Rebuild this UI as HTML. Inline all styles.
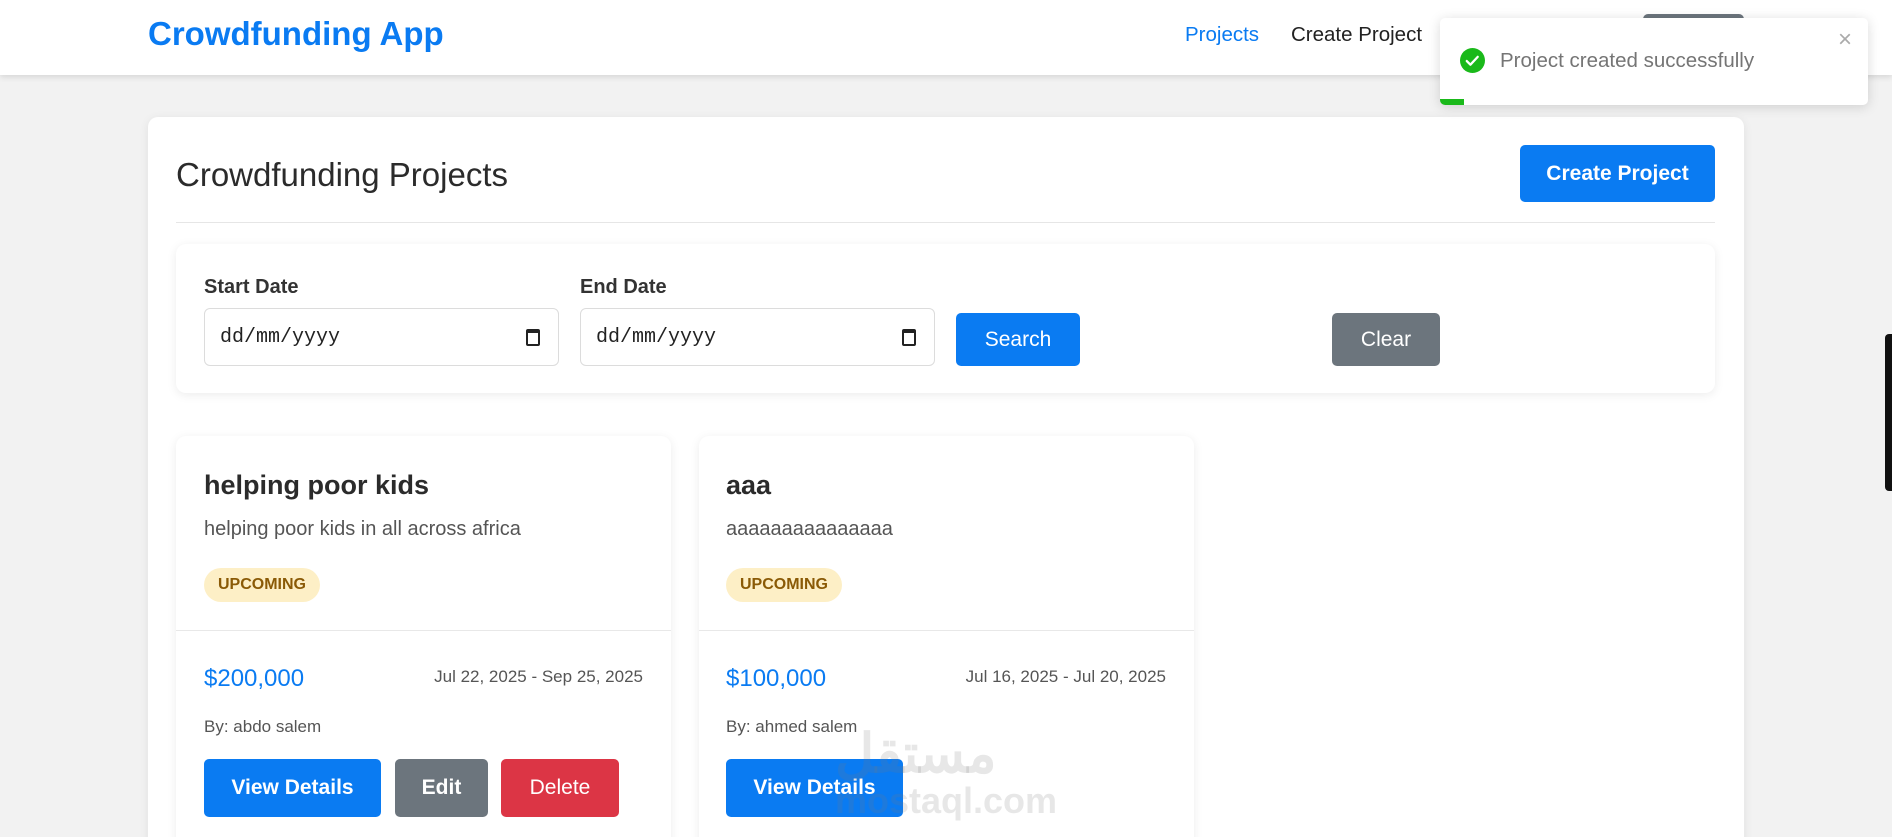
<!DOCTYPE html>
<html><head><meta charset="utf-8"><style>
*{box-sizing:border-box;margin:0;padding:0}
html,body{width:1892px;height:837px;overflow:hidden}
body{background:#f2f2f2;font-family:"Liberation Sans",sans-serif;position:relative;color:#2b2b2b}
.abs{position:absolute}
.nav{left:0;top:0;width:1892px;height:75px;background:#fff;box-shadow:0 2px 6px rgba(0,0,0,.12)}
.btn{position:absolute;color:#fff;border-radius:5px;display:flex;align-items:center;justify-content:center;font-size:21px}
.card{background:#fff;border-radius:10px;box-shadow:0 2px 10px rgba(0,0,0,.08)}
.inp{position:absolute;top:308px;height:58px;width:355px;border:1px solid #dcdcdc;border-radius:6px;background:#fff;font-family:"Liberation Mono",monospace;font-size:20px;display:flex;align-items:center;padding-left:15px;color:#222}
.cal{position:absolute;right:18px;top:20px;width:14px;height:17px;border:2px solid #222;border-top-width:4px;border-radius:2px}
.badge{position:absolute;top:132px;left:28px;height:34px;padding:0 14px;border-radius:17px;background:#fdefc6;color:#8a5a06;font-weight:bold;font-size:16px;display:flex;align-items:center}
</style></head><body>
<div class="abs nav"></div>
<div class="abs" style="left:148px;top:15px;font-size:33px;font-weight:bold;color:#0a7bf2">Crowdfunding App</div>
<div class="abs" style="left:1185px;top:23px;font-size:20.5px;color:#0a7bf2">Projects</div>
<div class="abs" style="left:1291px;top:23px;font-size:20.5px;color:#222">Create Project</div>
<div class="abs" style="left:1643px;top:14px;width:101px;height:40px;background:#6c757d;border-radius:5px"></div>

<div class="abs card" style="left:148px;top:117px;width:1596px;height:740px"></div>
<div class="abs" style="left:176px;top:156px;font-size:33px;color:#2b2b2b">Crowdfunding Projects</div>
<div class="btn" style="left:1520px;top:145px;width:195px;height:57px;background:#0a7bf2;font-weight:bold">Create Project</div>
<div class="abs" style="left:176px;top:222px;width:1539px;height:1px;background:#e6e6e6"></div>

<div class="abs card" style="left:176px;top:244px;width:1539px;height:149px"></div>
<div class="abs" style="left:204px;top:276px;font-size:20px;font-weight:bold;color:#333">Start Date</div>
<div class="abs" style="left:580px;top:276px;font-size:20px;font-weight:bold;color:#333">End Date</div>
<div class="inp" style="left:204px">dd/mm/yyyy<div class="cal"></div></div>
<div class="inp" style="left:580px">dd/mm/yyyy<div class="cal"></div></div>
<div class="btn" style="left:956px;top:313px;width:124px;height:53px;background:#0a7bf2">Search</div>
<div class="btn" style="left:1332px;top:313px;width:108px;height:53px;background:#6c757d">Clear</div>

<div class="abs card" style="left:176px;top:436px;width:495px;height:420px">
<div class="abs" style="left:28px;top:34px;font-size:27px;font-weight:bold;color:#2b2b2b">helping poor kids</div>
<div class="abs" style="left:28px;top:82px;font-size:20px;color:#555">helping poor kids in all across africa</div>
<div class="badge">UPCOMING</div>
<div class="abs" style="left:0;top:194px;width:495px;height:1px;background:#e8e8e8"></div>
<div class="abs" style="left:28px;top:229px;font-size:24px;color:#0a7bf2">$200,000</div>
<div class="abs" style="right:28px;top:231px;font-size:17px;color:#555">Jul 22, 2025 - Sep 25, 2025</div>
<div class="abs" style="left:28px;top:281px;font-size:17px;color:#555">By: abdo salem</div>
<div class="btn" style="left:28px;top:323px;width:177px;height:58px;background:#0a7bf2;font-weight:bold">View Details</div>
<div class="btn" style="left:219px;top:323px;width:93px;height:58px;background:#6c757d;font-weight:bold">Edit</div>
<div class="btn" style="left:325px;top:323px;width:118px;height:58px;background:#dc3545">Delete</div>
</div>

<div class="abs card" style="left:699px;top:436px;width:495px;height:420px">
<div class="abs" style="left:27px;top:34px;font-size:27px;font-weight:bold;color:#2b2b2b">aaa</div>
<div class="abs" style="left:27px;top:82px;font-size:20px;color:#555">aaaaaaaaaaaaaaa</div>
<div class="badge" style="left:27px">UPCOMING</div>
<div class="abs" style="left:0;top:194px;width:495px;height:1px;background:#e8e8e8"></div>
<div class="abs" style="left:27px;top:229px;font-size:24px;color:#0a7bf2">$100,000</div>
<div class="abs" style="right:28px;top:231px;font-size:17px;color:#555">Jul 16, 2025 - Jul 20, 2025</div>
<div class="abs" style="left:27px;top:281px;font-size:17px;color:#555">By: ahmed salem</div>
<div class="btn" style="left:27px;top:323px;width:177px;height:58px;background:#0a7bf2;font-weight:bold">View Details</div>
</div>

<div class="abs" style="left:835px;top:722px;font-size:54px;font-weight:bold;color:rgba(120,120,120,.18);font-family:'Liberation Sans','Noto Sans CJK SC',sans-serif">مستقل</div>
<div class="abs" style="left:835px;top:780px;font-size:36px;font-weight:bold;color:rgba(120,120,120,.18)">mostaql.com</div>

<div class="abs" style="left:1885px;top:334px;width:7px;height:157px;background:#111;border-radius:4px 0 0 4px"></div>

<div class="abs" style="left:1440px;top:18px;width:428px;height:87px;background:#fff;border-radius:5px;box-shadow:0 2px 12px rgba(0,0,0,.15);overflow:hidden">
<svg class="abs" style="left:20px;top:30px" width="25" height="25" viewBox="0 0 24 24"><circle cx="12" cy="12" r="12" fill="#1ab91a"/><path d="M6.5 12.5l3.5 3.5 7-7.5" stroke="#fff" stroke-width="2.2" fill="none" stroke-linecap="round" stroke-linejoin="round"/></svg>
<div class="abs" style="left:60px;top:31px;font-size:20.5px;color:#757575">Project created successfully</div>
<div class="abs" style="left:398px;top:8px;font-size:24px;color:#aaa">×</div>
<div class="abs" style="left:0;bottom:0;width:24px;height:6px;background:#1ab91a"></div>
</div>
</body></html>
